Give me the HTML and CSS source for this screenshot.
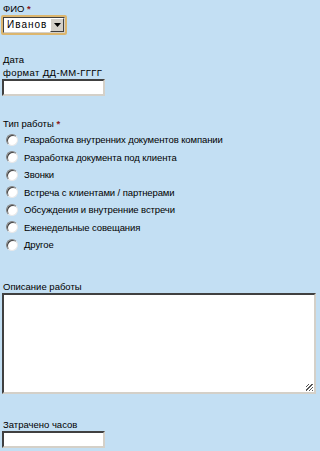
FILE: index.html
```html
<!DOCTYPE html>
<html lang="ru">
<head>
<meta charset="utf-8">
<title>Форма</title>
<link rel="stylesheet" href="styles.css">
</head>
<body>
<form class="form">
  <div class="field f-fio">
    <div class="label">ФИО <span class="req">*</span></div>
    <div class="select-ring">
      <div class="select">
        <span class="select-value">Иванов</span>
        <span class="select-btn"><svg width="7" height="4" viewBox="0 0 7 4"><path d="M0 0h7L3.5 4z" fill="#000"/></svg></span>
      </div>
    </div>
  </div>

  <div class="field f-date">
    <div class="label">Дата</div>
    <div class="hint">формат ДД-ММ-ГГГГ</div>
    <div class="input"></div>
  </div>

  <div class="field f-type">
    <div class="label">Тип работы <span class="req">*</span></div>
    <div class="radios">
      <div class="radio-row"><span class="radio"></span><span>Разработка внутренних документов компании</span></div>
      <div class="radio-row"><span class="radio"></span><span>Разработка документа под клиента</span></div>
      <div class="radio-row"><span class="radio"></span><span>Звонки</span></div>
      <div class="radio-row"><span class="radio"></span><span>Встреча с клиентами / партнерами</span></div>
      <div class="radio-row"><span class="radio"></span><span>Обсуждения и внутренние встречи</span></div>
      <div class="radio-row"><span class="radio"></span><span>Еженедельные совещания</span></div>
      <div class="radio-row"><span class="radio"></span><span>Другое</span></div>
    </div>
  </div>

  <div class="field f-desc">
    <div class="label">Описание работы</div>
    <div class="textarea"><span class="grip"></span></div>
  </div>

  <div class="field f-hours">
    <div class="label">Затрачено часов</div>
    <div class="input"></div>
  </div>
</form>
</body>
</html>
```

FILE: styles.css
```css
html, body {
  margin: 0;
  padding: 0;
  background: #c3dff3;
}
body {
  font-family: "Liberation Sans", Arial, sans-serif;
  font-size: 9.5px;
  color: #000;
  height: 451px;
  overflow: hidden;
}
.form {
  padding: 2px 0 0 2px;
}
.label, .hint {
  line-height: 13px;
  height: 13px;
  padding-left: 1px;
}
.hint {
  letter-spacing: 0.4px;
}
.req {
  color: #8b1a1a;
  font-weight: bold;
}
.select-ring {
  margin-left: -1px;
  width: 62px;
  height: 16px;
  border: 2px solid #dcb66e;
  border-radius: 2px;
}
.select {
  display: flex;
  height: 14px;
  border: 1px solid;
  border-color: #404040 #d4d0c8 #d4d0c8 #404040;
  background: #fff;
}
.select-value {
  flex: 1;
  padding-left: 3px;
  line-height: 14px;
  font-size: 10px;
  letter-spacing: 1px;
}
.select-btn {
  width: 14px;
  height: 14px;
  box-sizing: border-box;
  background: #d4d0c8;
  border: 1px solid;
  border-color: #fff #404040 #404040 #fff;
  display: flex;
  align-items: center;
  justify-content: center;
}
.f-date {
  margin-top: 18px;
}
.input {
  width: 103px;
  height: 17px;
  box-sizing: border-box;
  background: #fff;
  border: 2px solid;
  border-color: #404040 #d4d0c8 #d4d0c8 #404040;
}
.f-type {
  margin-top: 21px;
}
.radios {
  margin-top: 1px;
}
.radio-row {
  display: flex;
  align-items: center;
  height: 17.5px;
  gap: 6px;
  padding-left: 4px;
  letter-spacing: -0.1px;
}
.radio {
  flex: none;
  width: 12px;
  height: 12px;
  box-sizing: border-box;
  border-radius: 50%;
  background: #fff;
  border: 1px solid;
  border-color: #808080 #e8e8e8 #e8e8e8 #808080;
  box-shadow: inset 1px 1px 0 #404040;
}
.f-desc {
  margin-top: 26px;
}
.textarea {
  position: relative;
  width: 314px;
  height: 101px;
  box-sizing: border-box;
  background: #fff;
  border: 2px solid;
  border-color: #404040 #d4d0c8 #d4d0c8 #404040;
}
.grip {
  position: absolute;
  right: 1px;
  bottom: 1px;
  width: 7px;
  height: 7px;
  background: repeating-linear-gradient(135deg, transparent 0 1.5px, #555 1.5px 2.5px);
}
.f-hours {
  margin-top: 24px;
}
```
